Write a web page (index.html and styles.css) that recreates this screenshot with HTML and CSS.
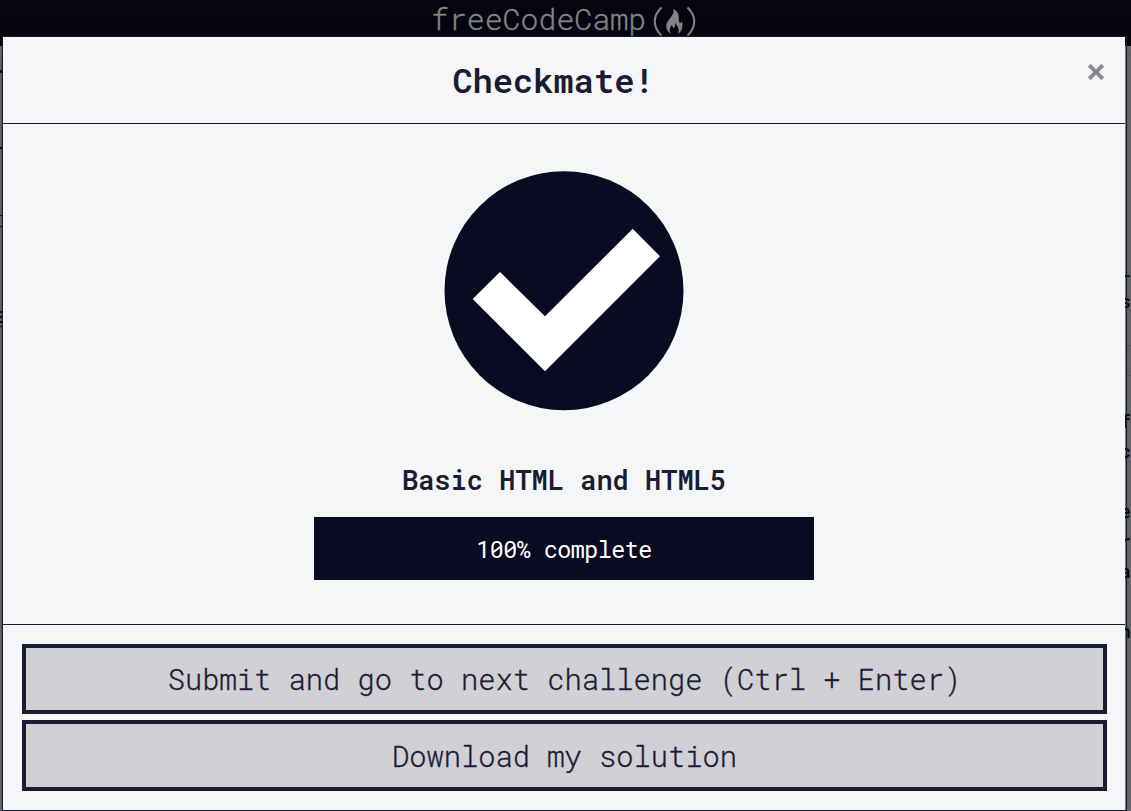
FILE: index.html
```
<!DOCTYPE html>
<html lang="en">
<head>
<meta charset="utf-8">
<title>Checkmate!</title>
<link rel="stylesheet" href="styles.css">
</head>
<body>
<div class="page">
  <header class="nav">
    <span class="brand">freeCodeCamp</span>
    <svg class="flame" width="46" height="32" viewBox="0 0 46 32">
      <path d="M10.500 2.500C1.500 11 1.500 22 10.500 30.500M36.500 2.500c9 8.500 9 19.500 0 28" fill="none" stroke="#858585" stroke-width="2.100"/>
      <path d="M22.500 4C24 10 17 14 15.500 19C14.500 24 17 27 20 29C18 25 18.500 23 21 20C22 22 21.500 23 23 23C24.500 22 24 20 24 18C27 21 29 25 26.500 29C31 27 32 22 31 16C30.500 18 29.500 18.500 28.500 17.500C27 15 29 11 26 7C25 5.500 24 4.500 22.500 4Z" fill="#858585"/>
    </svg>
  </header>
  <main class="workspace">
    <div class="lesson">
      <i class="mark tab"></i><i class="mark rule"></i><i class="mark box"></i><i class="mark lines"></i>
    </div>
    <div class="preview">
      <span class="wide">L</span><span>s</span><span class="faint"></span><span class="faint"></span><span></span><span>f</span><span>c</span><span></span><span>e</span><span>r</span><span>a</span><span></span><span>n</span>
    </div>
  </main>
</div>
<section class="modal">
  <div class="modal-content">
    <header class="modal-header">
      <h1 class="title">Checkmate!</h1>
      <button class="close" aria-label="Close"><svg width="18" height="18" viewBox="0 0 18 18"><path d="M2.300 2.300L15.700 15.700M15.700 2.300L2.300 15.700" stroke="#888995" stroke-width="4"/></svg></button>
    </header>
    <div class="modal-body">
      <svg class="check" width="240" height="240" viewBox="0 0 240 240">
        <circle cx="120" cy="119.700" r="119.500" fill="#0a0a23"/>
        <path d="M28.700 128L56 101L101 145.300L188.700 57.800L216 85.300L101 200.300Z" fill="#fff"/>
      </svg>
      <h2 class="block-name">Basic HTML and HTML5</h2>
      <div class="progress">100% complete</div>
    </div>
    <footer class="modal-footer">
      <button class="action">Submit and go to next challenge (Ctrl + Enter)</button>
      <button class="action second">Download my solution</button>
    </footer>
  </div>
</section>
</body>
</html>
```
FILE: styles.css
```
* { box-sizing: border-box; }
body {
  margin: 0;
  height: 811px;
  overflow: hidden;
  position: relative;
  font-family: "Roboto Mono", "DejaVu Sans Mono", monospace;
  color: #1b1b32;
}
.page { height: 811px; display: flex; flex-direction: column; background: #7b7b7c; }
.nav {
  height: 46px;
  flex: none;
  display: flex;
  justify-content: center;
  align-items: flex-start;
  padding-right: 3px;
  background: #050511;
  color: #858585;
}
.brand {
  font-size: 29.900px;
  line-height: 38px;
  font-weight: 300;
  -webkit-text-stroke: .35px #858585;
}
.flame { margin: 5px 0 0 5px; }
.workspace { flex: 1; display: flex; justify-content: space-between; }
.lesson { width: 3px; display: flex; flex-direction: column; }
.mark { display: block; height: 2px; background: #151515; }
.tab { margin-top: 24px; height: 3px; }
.rule { margin-top: 74px; }
.box { margin-top: 66px; height: 12px; background: none; border: solid #151515; border-width: 1px 0; }
.lines { margin-top: 84px; height: 16px; background: repeating-linear-gradient(#151515 0 2px, transparent 2px 5px); }
.preview {
  width: 11px;
  padding-top: 210px;
  display: flex;
  flex-direction: column;
  font-size: 18px;
  line-height: 30px;
  font-weight: 500;
  color: #030309;
}
.preview span { height: 30px; flex: none; }
.preview .wide { font-size: 17px; text-align: right; }
.preview .faint { border-bottom: 1px solid #6a6a6a; }
.modal {
  position: absolute;
  left: 2px;
  top: 36px;
  width: 1125px;
  height: 775px;
  padding-right: 1px;
  border: 1px solid #1b1b32;
  box-shadow: 0 5px 15px rgba(0, 0, 0, .5);
}
.modal-content { height: 100%; display: flex; flex-direction: column; background: #f5f6f7; }
.modal-header {
  height: 87px;
  display: grid;
  grid-template-columns: 39px 1fr 60px;
  border-bottom: 1px solid #1b1b32;
}
.title {
  grid-column: 2;
  margin: 0;
  padding-top: 2px;
  text-align: center;
  font-size: 33.700px;
  line-height: 82px;
  font-weight: 600;
}
.close { margin: 26px 20px 0 auto; padding: 0; border: 0; background: none; width: 18px; height: 18px; }
.close svg { display: block; }
.modal-body { height: 500px; display: flex; flex-direction: column; align-items: center; padding-top: 47px; }
.check { flex: none; margin-right: 1px; }
.block-name {
  margin: 51px 0 0;
  font-size: 27px;
  line-height: 36px;
  font-weight: 600;
}
.progress {
  width: 500px;
  height: 63px;
  margin-top: 19px;
  background: #0a0a23;
  color: #fff;
  font-size: 23.400px;
  letter-spacing: -.54px;
  font-weight: 400;
  line-height: 64px;
  text-align: center;
}
.modal-footer {
  flex: 1;
  border-top: 1px solid #1b1b32;
  padding: 19px 18px 19px 19px;
  display: flex;
  flex-direction: column;
  gap: 6px;
}
.action {
  height: 70px;
  padding: 0;
  border: 4px solid #1b1b32;
  background: #d0d0d5;
  color: #1b1b32;
  font-family: inherit;
  font-size: 28.750px;
  font-weight: 300;
  -webkit-text-stroke: .35px #1b1b32;
  line-height: 62px;
}
.second { height: 71px; }
```
